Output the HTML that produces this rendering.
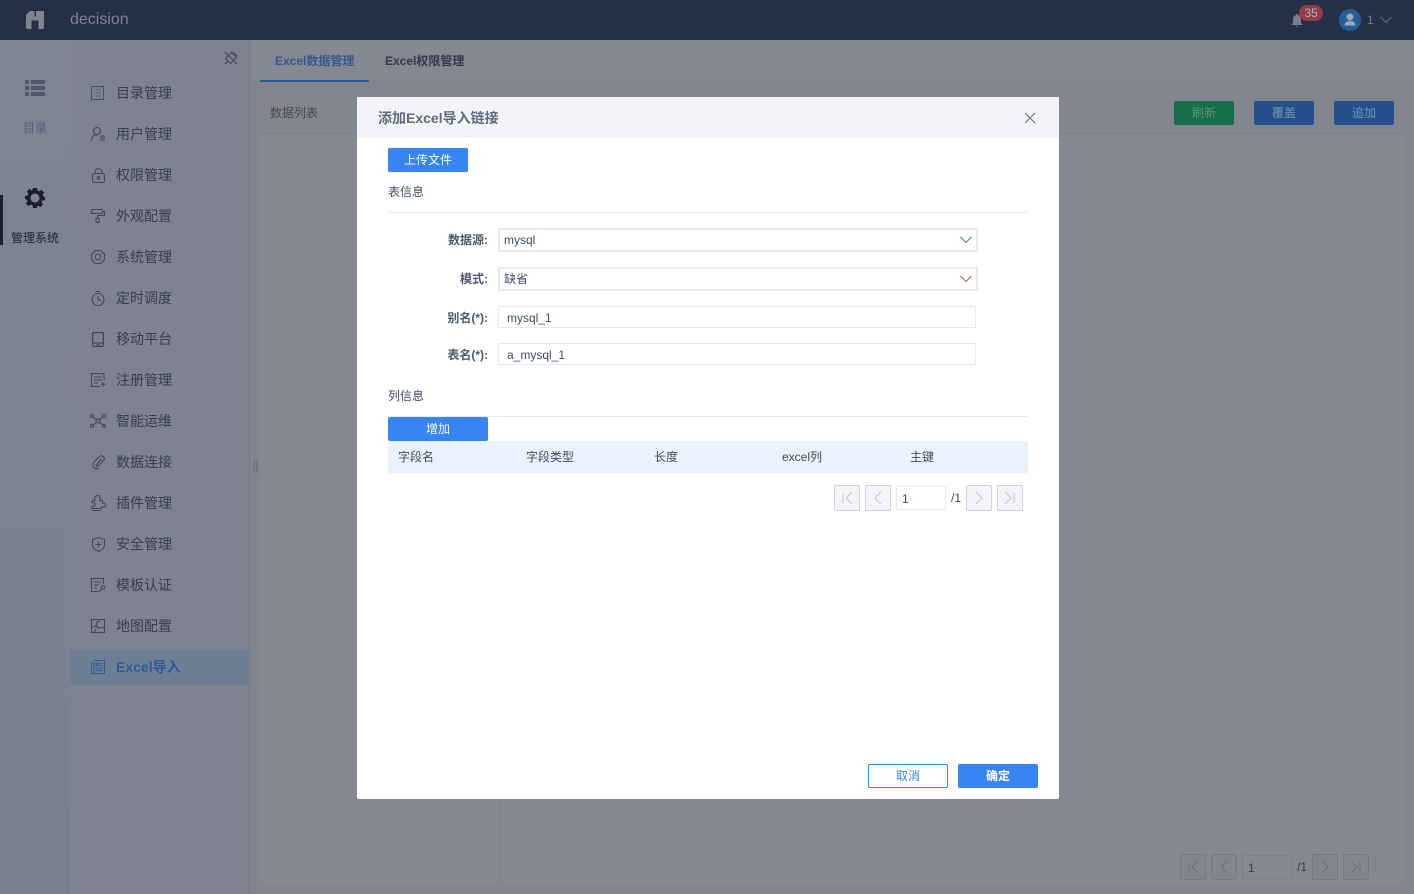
<!DOCTYPE html>
<html lang="zh"><head><meta charset="utf-8"><title>decision</title>
<style>
html,body{margin:0;padding:0;width:1414px;height:894px;overflow:hidden;background:#82858d}
body{position:relative;font-family:"Liberation Sans","Noto Sans CJK SC",sans-serif;font-size:12px;color:#3d4d66}
.a{position:absolute;box-sizing:border-box}
.t{position:absolute;white-space:nowrap;line-height:20px}
.nav{position:absolute;left:116px;font-size:14px;line-height:20px;color:#363d4e;white-space:nowrap}
svg{position:absolute;overflow:visible}
.ic{fill:none;stroke:#404757;stroke-width:1.1}
.pg{position:absolute;width:26px;height:26px;box-sizing:border-box;border:1px solid #d0d3d9;background:#f2f4f7;border-radius:2px}
.pg svg{left:0;top:0;fill:none;stroke:#c6cad1;stroke-width:1.1}
.pd{border-color:#757983;background:#81858d}
.pd svg{stroke:#6e7380}
.lb{position:absolute;left:400px;width:88px;text-align:right;font-weight:bold;color:#4c5a70;line-height:20px;white-space:nowrap}
.inp{position:absolute;box-sizing:border-box;background:#fff;line-height:20px;color:#3d4d66}
</style></head><body>
<div class="a" style="left:0;top:0;width:1414px;height:40px;background:#252f48"></div>
<svg style="left:26px;top:11px" width="18" height="18" viewBox="0 0 18 18"><path fill="#80858f" d="M4 0H8.500V5.500H10V0H18V16a2 2 0 0 1-2 2H12.500V9.500H5.500V18H2a2 2 0 0 1-2-2V4Z"/></svg>
<div class="t" style="left:70px;top:10px;font-size:16px;color:#80858f">decision</div>
<svg style="left:1291px;top:14px" width="12" height="13" viewBox="0 0 12 13"><path fill="#787e8b" d="M6 0a1 1 0 0 1 1 1.100C9.500 1.800 10 4 10 6v3l2 2H0l2-2V6c0-2 .5-4.200 3-4.900A1 1 0 0 1 6 0ZM4.500 12h3L6 13Z"/></svg>
<div class="a" style="left:1299px;top:5px;width:24px;height:16px;border-radius:8px;background:#933b47;color:#b0b4bc;text-align:center;font-size:12px;line-height:16px">35</div>
<div class="a" style="left:1339px;top:9px;width:22px;height:22px;border-radius:50%;background:#255e96"></div>
<svg style="left:1339px;top:9px" width="22" height="22" viewBox="0 0 22 22"><circle cx="11" cy="8" r="3.500" fill="#9ca8ba"/><path fill="#9ca8ba" d="M5.500 16.500c0-3 2.500-4.500 5.500-4.500s5.500 1.500 5.500 4.500Z"/></svg>
<div class="t" style="left:1367px;top:10px;font-size:12px;color:#767a84">1</div>
<svg style="left:1380px;top:16px" width="12" height="8" viewBox="0 0 12 8"><path d="M.5 1 6 6.500 11.500 1" fill="none" stroke="#636b7a" stroke-width="1.100"/></svg>

<div class="a" style="left:0;top:40px;width:70px;height:854px;background:linear-gradient(#7e8493,#788090)"></div>
<div class="a" style="left:70px;top:40px;width:180px;height:854px;background:#7e838f;border-right:1px solid #747985"></div>
<svg style="left:25px;top:80px" width="20" height="17" viewBox="0 0 20 17"><g fill="#515869"><rect x="0" y="0" width="4" height="4"/><rect x="6" y="0" width="14" height="4"/><rect x="0" y="6" width="4" height="4"/><rect x="6" y="6" width="14" height="4"/><rect x="0" y="12" width="4" height="4"/><rect x="6" y="12" width="14" height="4"/></g></svg>
<div class="t" style="left:23px;top:118px;color:#5a6074">目录</div>
<div class="a" style="left:0;top:195px;width:3px;height:50px;background:#1b1f28"></div>
<svg style="left:25px;top:188px" width="20" height="20" viewBox="0 0 20 20"><path fill="#1b1f28" fill-rule="evenodd" d="M8 0h4l.5 2.600 1.800.8 2.200-1.500 2.600 2.600-1.500 2.200.8 1.800L20 9v3l-2.600.5-.8 1.800 1.500 2.200-2.600 2.600-2.200-1.500-.8.4L12 20H8l-.5-2.600-1.800-.8-2.200 1.500-2.600-2.600 1.500-2.200-.8-1.800L0 11V8l2.600-.5.8-1.800L1.900 3.500 4.500.9l2.200 1.500 .8-.4ZM10 5.500a4.500 4.500 0 1 0 0 9 4.500 4.500 0 0 0 0-9Z"/></svg>
<div class="t" style="left:11px;top:228px;color:#1b1f28">管理系统</div>
<svg style="left:224px;top:51px" width="14" height="14" viewBox="0 0 14 14" class="ic"><path d="M1.500 7.500 7.500 1.500 12.500 6.500 6.500 12.500ZM1 1l12 12M9 1l4 4M1 13l3-3"/></svg>

<svg style="left:91px;top:86px" width="14" height="14" viewBox="0 0 14 14" class="ic"><rect x=".5" y=".5" width="12" height="13" stroke="#435574"/><path d="M3 4h1M5 4h5M3 7h1M5 7h5M3 10h1M5 10h5" stroke="#585f70"/></svg>
<div class="nav" style="top:83px">目录管理</div>
<svg style="left:91px;top:127px" width="14" height="14" viewBox="0 0 14 14" class="ic"><circle cx="6" cy="4" r="3.500"/><path d="M.5 14c0-4 2-6 5.500-6M9 9h5M9 11h5M9 13h5"/></svg>
<div class="nav" style="top:124px">用户管理</div>
<svg style="left:92px;top:168px" width="13" height="15" viewBox="0 0 13 15" class="ic"><rect x=".5" y="5.500" width="12" height="9" rx="2"/><path d="M3 5.500V4a3.500 3.500 0 0 1 7 0v1.500"/><circle cx="6.500" cy="10" r="1.300"/></svg>
<div class="nav" style="top:165px">权限管理</div>
<svg style="left:91px;top:209px" width="14" height="14" viewBox="0 0 14 14" class="ic"><rect x=".5" y=".5" width="11" height="4" rx="1"/><path d="M11.500 2.500h2v4H6.500V9"/><rect x="5" y="9.500" width="3" height="4"/></svg>
<div class="nav" style="top:206px">外观配置</div>
<svg style="left:91px;top:250px" width="14" height="14" viewBox="0 0 14 14" class="ic"><path d="M13 7A2.600 2.600 0 0 1 11.240 11.240A2.600 2.600 0 0 1 7 13A2.600 2.600 0 0 1 2.760 11.240A2.600 2.600 0 0 1 1 7A2.600 2.600 0 0 1 2.760 2.760A2.600 2.600 0 0 1 7 1A2.600 2.600 0 0 1 11.240 2.760A2.600 2.600 0 0 1 13 7Z"/><circle cx="7" cy="7" r="2.800"/></svg>
<div class="nav" style="top:247px">系统管理</div>
<svg style="left:91px;top:291px" width="14" height="15" viewBox="0 0 14 15" class="ic"><circle cx="7" cy="8.500" r="6"/><path d="M5 .5h4M7 5v4h3"/></svg>
<div class="nav" style="top:288px">定时调度</div>
<svg style="left:92px;top:332px" width="12" height="15" viewBox="0 0 12 15" class="ic"><rect x=".6" y=".6" width="10.800" height="13.800" rx="1" stroke-width="1.200"/><path d="M.6 11h10.800M4.500 12.800h3" stroke-width="1.300"/></svg>
<div class="nav" style="top:329px">移动平台</div>
<svg style="left:91px;top:373px" width="15" height="14" viewBox="0 0 15 14" class="ic"><path d="M13 7V.5H.5v13H9M3 4h8M3 7h8M3 10h4M12 9v4.500M10 11.200h4.500"/></svg>
<div class="nav" style="top:370px">注册管理</div>
<svg style="left:90px;top:414px" width="16" height="14" viewBox="0 0 16 14" class="ic"><circle cx="8" cy="7" r="2"/><circle cx="2" cy="2" r="1.500"/><circle cx="14" cy="2" r="1.500"/><circle cx="2" cy="12" r="1.500"/><circle cx="14" cy="12" r="1.500"/><path d="M3 3l3.500 2.700M13 3 9.500 5.700M3 11l3.500-2.700M13 11 9.500 8.300"/></svg>
<div class="nav" style="top:411px">智能运维</div>
<svg style="left:92px;top:455px" width="13" height="14" viewBox="0 0 13 14" class="ic"><path d="M9.500 4 4.500 9.500c-1 1.300.3 2.500 1.500 1.500L11.500 5.500C13.500 3 10.500-.5 7.500 1.500L2 7c-3 3.500 0 8 5 6.500"/></svg>
<div class="nav" style="top:452px">数据连接</div>
<svg style="left:91px;top:495px" width="15" height="16" viewBox="0 0 15 16" class="ic"><path d="M1 5.500h3C3 3 4.500 .5 6.500.5S10 3 9 5.500h2.500v2.800C13.500 7.500 14.500 8.500 14.500 10S13 12.500 11.500 12H10.500v1.500H1V11c2 .5 3-.5 3-1.800S3 7 1 7.500ZM1 15.500h9"/></svg>
<div class="nav" style="top:493px">插件管理</div>
<svg style="left:92px;top:537px" width="13" height="15" viewBox="0 0 13 15" class="ic"><path d="M6.500.5 12.500 2.500V8c0 3-2.500 5-6 6.500C3 13 .5 11 .5 8V2.500ZM6.500 4.500v6M3.500 7.500h6"/></svg>
<div class="nav" style="top:534px">安全管理</div>
<svg style="left:91px;top:578px" width="15" height="14" viewBox="0 0 15 14" class="ic"><path d="M12.500 6V.5H.5v13h8M3 4h7M3 7h5M3 10h3"/><circle cx="12" cy="9.500" r="1.800"/><path d="M10.700 10.800 8.500 13"/></svg>
<div class="nav" style="top:575px">模板认证</div>
<svg style="left:91px;top:619px" width="14" height="14" viewBox="0 0 14 14" class="ic"><rect x=".5" y=".5" width="13" height="13"/><path d="M.5 8.500 5 7l1-4 3-1M5 7l3 2 5.500-1M3 13.500 5 10"/></svg>
<div class="nav" style="top:616px">地图配置</div>
<div class="a" style="left:70px;top:649px;width:179px;height:36px;background:#6e7f95"></div>
<svg style="left:91px;top:660px" width="14" height="14" viewBox="0 0 14 14" fill="none" stroke="#335e96" stroke-width="1.100"><path d="M3 .5h10.500v13H.5V3H3v10"/><path d="M5 3h2v2.500H5ZM8.500 3.500H12M8.500 5.500H12M5 8h7M5 10.500h7"/></svg>
<div class="t" style="left:116px;top:657px;font-size:14px;font-weight:bold;color:#2c5b96">Excel导入</div>

<div class="a" style="left:253px;top:461px;width:5px;height:12px;background-image:radial-gradient(#585d6b .6px,transparent .7px);background-size:2.500px 2px"></div>

<div class="a" style="left:250px;top:40px;width:1164px;height:42px;background:#858890;border-bottom:1px solid #7b7f88"></div>
<div class="t" style="left:275px;top:51px;font-weight:bold;color:#365890">Excel数据管理</div>
<div class="a" style="left:260px;top:80px;width:109px;height:2px;background:#285a9c"></div>
<div class="t" style="left:385px;top:51px;font-weight:bold;color:#323949">Excel权限管理</div>
<div class="a" style="left:260px;top:93px;width:1144px;height:41px;background:#82878f;border-bottom:1px solid #7a7e88"></div>
<div class="a" style="left:260px;top:134px;width:1144px;height:750px;background:#858890"></div>
<div class="a" style="left:499px;top:134px;width:1px;height:750px;background:#7b7f88"></div>
<div class="t" style="left:270px;top:103px;color:#434856">数据列表</div>
<div class="a" style="left:1174px;top:101px;width:60px;height:24px;background:#18704a;border-radius:2px;color:#5c927b;text-align:center;line-height:24px">刷新</div>
<div class="a" style="left:1254px;top:101px;width:60px;height:24px;background:#26508c;border-radius:2px;color:#7b90b0;text-align:center;line-height:24px">覆盖</div>
<div class="a" style="left:1334px;top:101px;width:60px;height:24px;background:#26508c;border-radius:2px;color:#7b90b0;text-align:center;line-height:24px">追加</div>

<div class="pg pd" style="left:1180px;top:854px"><svg width="24" height="24" viewBox="0 0 24 24"><path d="M8 7v10M17 6l-6 6 6 6"/></svg></div>
<div class="pg pd" style="left:1211px;top:854px"><svg width="24" height="24" viewBox="0 0 24 24"><path d="M15 6l-6 6 6 6"/></svg></div>
<div class="a" style="left:1242px;top:855px;width:50px;height:24px;border:1px solid #7a7e88;border-radius:2px;padding-left:5px;line-height:24px;color:#3b414f">1</div>
<div class="t" style="left:1297px;top:857px;color:#363c4a">/1</div>
<div class="pg pd" style="left:1312px;top:854px"><svg width="24" height="24" viewBox="0 0 24 24"><path d="M9 6l6 6-6 6"/></svg></div>
<div class="pg pd" style="left:1343px;top:854px"><svg width="24" height="24" viewBox="0 0 24 24"><path d="M16 7v10M7 6l6 6-6 6"/></svg></div>

<div class="a" style="left:357px;top:97px;width:702px;height:702px;background:#fff;border-radius:2px"></div>
<div class="a" style="left:357px;top:97px;width:702px;height:41px;background:#f2f4f8"></div>
<div class="t" style="left:378px;top:108px;font-size:14px;font-weight:bold;color:#5f6a7c">添加Excel导入链接</div>
<svg style="left:1025px;top:113px" width="10" height="10" viewBox="0 0 10 10"><path d="M0 0 10 10M10 0 0 10" stroke="#5f6a7c" stroke-width="1"/></svg>
<div class="a" style="left:388px;top:148px;width:80px;height:24px;background:#3685f2;border-radius:2px;color:#fff;text-align:center;line-height:24px">上传文件</div>
<div class="t" style="left:388px;top:182px;color:#3d4d66">表信息</div>
<div class="a" style="left:388px;top:212px;width:640px;height:1px;background:#e8e8ed"></div>

<div class="lb" style="top:230px">数据源:</div>
<div class="inp" style="left:498px;top:228px;width:480px;height:24px;border:2px solid #e8e8ed;padding-left:4px;line-height:20px">mysql</div>
<svg style="left:960px;top:236px" width="12" height="8" viewBox="0 0 12 8"><path d="M.5 1 6 6.500 11.500 1" fill="none" stroke="#4c7fb5" stroke-width="1.100"/></svg>
<div class="lb" style="top:269px">模式:</div>
<div class="inp" style="left:498px;top:267px;width:480px;height:24px;border:2px solid #e8e8ed;padding-left:4px;line-height:20px">缺省</div>
<svg style="left:960px;top:275px" width="12" height="8" viewBox="0 0 12 8"><path d="M.5 1 6 6.500 11.500 1" fill="none" stroke="#a6703f" stroke-width="1.100"/></svg>
<div class="lb" style="top:308px">别名(*):</div>
<div class="inp" style="left:498px;top:306px;width:478px;height:22px;border:1px solid #e8e8ed;padding-left:8px;line-height:22px">mysql_1</div>
<div class="lb" style="top:345px">表名(*):</div>
<div class="inp" style="left:498px;top:343px;width:478px;height:22px;border:1px solid #e8e8ed;padding-left:8px;line-height:22px">a_mysql_1</div>

<div class="t" style="left:388px;top:386px;color:#3d4d66">列信息</div>
<div class="a" style="left:388px;top:416px;width:640px;height:1px;background:#e8e8ed"></div>
<div class="a" style="left:388px;top:417px;width:100px;height:24px;background:#3685f2;border-radius:2px;color:#fff;text-align:center;line-height:24px">增加</div>
<div class="a" style="left:388px;top:441px;width:640px;height:32px;background:#eaf2fd"></div>
<div class="t" style="left:398px;top:447px">字段名</div>
<div class="t" style="left:526px;top:447px">字段类型</div>
<div class="t" style="left:654px;top:447px">长度</div>
<div class="t" style="left:782px;top:447px">excel列</div>
<div class="t" style="left:910px;top:447px">主键</div>

<div class="pg" style="left:834px;top:485px"><svg width="24" height="24" viewBox="0 0 24 24"><path d="M8 7v10M17 6l-6 6 6 6"/></svg></div>
<div class="pg" style="left:865px;top:485px"><svg width="24" height="24" viewBox="0 0 24 24"><path d="M15 6l-6 6 6 6"/></svg></div>
<div class="inp" style="left:896px;top:486px;width:50px;height:24px;border:1px solid #e8e8ed;border-radius:2px;padding-left:5px;line-height:24px">1</div>
<div class="t" style="left:951px;top:488px">/1</div>
<div class="pg" style="left:966px;top:485px"><svg width="24" height="24" viewBox="0 0 24 24"><path d="M9 6l6 6-6 6"/></svg></div>
<div class="pg" style="left:997px;top:485px"><svg width="24" height="24" viewBox="0 0 24 24"><path d="M16 7v10M7 6l6 6-6 6"/></svg></div>

<div class="a" style="left:868px;top:764px;width:80px;height:24px;border:1px solid #3685f2;border-radius:2px;background:#fff;color:#3685f2;text-align:center;line-height:22px">取消</div>
<div class="a" style="left:958px;top:764px;width:80px;height:24px;background:#3685f2;border-radius:2px;color:#fff;font-weight:bold;text-align:center;line-height:24px">确定</div>
</body></html>
